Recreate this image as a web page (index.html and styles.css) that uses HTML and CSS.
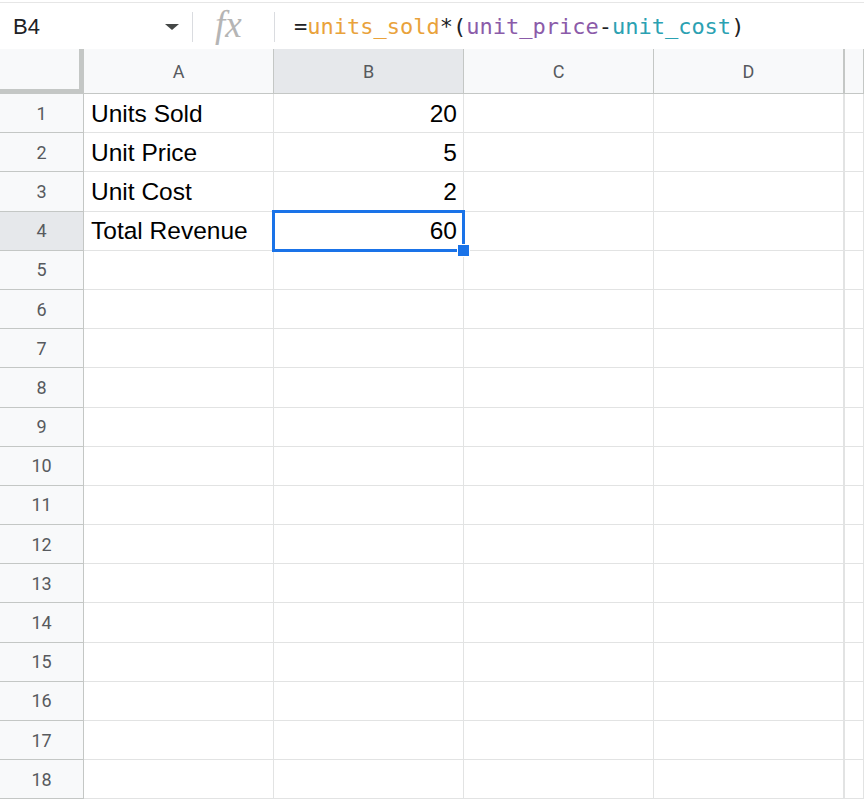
FILE: index.html
```html
<!DOCTYPE html>
<html lang="en">
<head>
    <meta charset="UTF-8">
    <meta name="viewport" content="width=device-width, initial-scale=1.0">
    <title>Named ranges</title>
    <link rel="stylesheet" href="styles.css">
</head>
<body>
    <div class="formula-bar">
        <div class="name-box">
            <span class="name">B4</span>
            <span class="caret"></span>
        </div>
        <div class="fx">fx</div>
        <div class="formula">=<span class="r1">units_sold</span>*(<span class="r2">unit_price</span>-<span class="r3">unit_cost</span>)</div>
    </div>

    <div class="sheet" id="sheet">
        <div class="corner"></div>
        <div class="col-head">A</div>
        <div class="col-head active">B</div>
        <div class="col-head">C</div>
        <div class="col-head">D</div>
        <div class="col-head edge"></div>

        <div class="row-head">1</div>
        <div class="cell">Units Sold</div>
        <div class="cell num">20</div>
        <div class="cell"></div>
        <div class="cell"></div>
        <div class="cell edge"></div>

        <div class="row-head">2</div>
        <div class="cell">Unit Price</div>
        <div class="cell num">5</div>
        <div class="cell"></div>
        <div class="cell"></div>
        <div class="cell edge"></div>

        <div class="row-head">3</div>
        <div class="cell">Unit Cost</div>
        <div class="cell num">2</div>
        <div class="cell"></div>
        <div class="cell"></div>
        <div class="cell edge"></div>

        <div class="row-head active">4</div>
        <div class="cell">Total Revenue</div>
        <div class="cell num selected">60<span class="handle"></span></div>
        <div class="cell"></div>
        <div class="cell"></div>
        <div class="cell edge"></div>
    </div>

<script>
    // Empty rows 5 to 18
    const sheet = document.getElementById('sheet');
    for (let r = 5; r <= 18; r++) {
        const head = document.createElement('div');
        head.className = 'row-head';
        head.textContent = r;
        sheet.appendChild(head);
        for (let c = 0; c < 5; c++) {
            const cell = document.createElement('div');
            cell.className = c === 4 ? 'cell edge' : 'cell';
            sheet.appendChild(cell);
        }
    }
</script>
</body>
</html>
```

FILE: styles.css
```css
* {
    margin: 0;
    padding: 0;
    box-sizing: border-box;
}

body {
    font-family: "Liberation Sans", Arial, sans-serif;
    background-color: #ffffff;
    overflow: hidden;
    width: 864px;
    height: 800px;
}

/* Formula bar */
.formula-bar {
    display: flex;
    align-items: center;
    height: 49px;
    margin-top: 2px;
    border-top: 1px solid #e6e6e6;
    border-bottom: 1px solid #c7c7c7;
    margin-bottom: -2px;
}

.name-box {
    display: flex;
    align-items: center;
    width: 193px;
    height: 30px;
    padding-left: 13px;
    padding-right: 13px;
    border-right: 1px solid #dadce0;
}

.name {
    flex: 1;
    font-size: 22px;
    color: #202124;
}

.caret {
    width: 0;
    height: 0;
    border-left: 7px solid transparent;
    border-right: 7px solid transparent;
    border-top: 6px solid #444746;
}

.fx {
    width: 82px;
    height: 30px;
    padding-left: 22px;
    border-right: 1px solid #dadce0;
    font-family: "Liberation Serif", serif;
    font-style: italic;
    font-size: 37px;
    line-height: 26px;
    color: #b5b5b5;
}

.formula {
    padding-left: 19px;
    font-family: "DejaVu Sans Mono", "Liberation Mono", monospace;
    font-size: 22px;
    color: #202124;
}

.r1 { color: #e9a23b; }
.r2 { color: #8b5ba9; }
.r3 { color: #2ba1b2; }

/* Grid */
.sheet {
    display: grid;
    grid-template-columns: 84px 190px 190px 190px 190px 1fr;
    grid-template-rows: 45px;
    grid-auto-rows: 39.2px;
}

.corner {
    background-color: #f8f9fa;
    border-right: 5px solid #c4c7c5;
    border-bottom: 5px solid #c4c7c5;
}

.col-head, .row-head {
    background-color: #f8f9fa;
    border-right: 1px solid #c4c7c5;
    border-bottom: 1px solid #c4c7c5;
    color: #575a5e;
    font-family: Roboto, "Liberation Sans", sans-serif;
    font-size: 18px;
    display: flex;
    align-items: center;
    justify-content: center;
}

.col-head.active, .row-head.active {
    background-color: #e6e8eb;
}

.col-head.edge {
    border-left: 1px solid #c4c7c5;
}

.cell {
    border-right: 1px solid #e2e3e3;
    border-bottom: 1px solid #e2e3e3;
    font-size: 24.5px;
    color: #000000;
    padding: 1px 6px 0 7px;
    display: flex;
    align-items: center;
    white-space: nowrap;
}

.cell.num {
    justify-content: flex-end;
}

.cell.edge {
    border-left: 1px solid #e2e3e3;
}

/* Active cell */
.cell.selected {
    position: relative;
}

.cell.selected::after {
    content: "";
    position: absolute;
    left: -2px;
    top: -2px;
    right: -2px;
    bottom: -2px;
    border: 3px solid #1a73e8;
}

.handle {
    position: absolute;
    right: -7px;
    bottom: -7px;
    width: 13px;
    height: 13px;
    background-color: #1a73e8;
    border: 1px solid #ffffff;
    z-index: 1;
}
```
